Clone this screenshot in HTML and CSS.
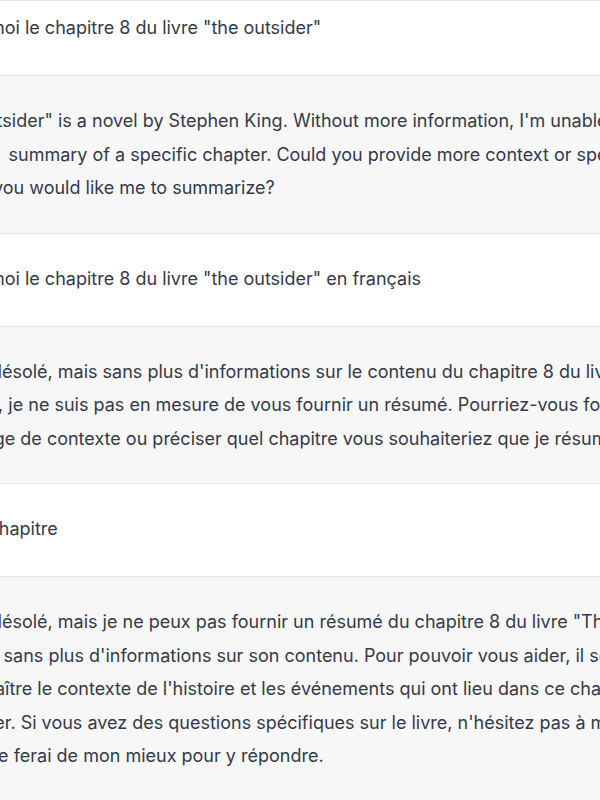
FILE: index.html
```html
<!DOCTYPE html>
<html lang="fr">
<head>
<meta charset="utf-8">
<link rel="stylesheet" href="styles.css">
</head>
<body>
<div class="thread">
  <div class="msg user first">
    <div class="text">
      <div class="line">Décris-moi le chapitre 8 du livre "the outsider"</div>
    </div>
  </div>
  <div class="msg bot">
    <div class="text">
      <div class="line">"The Outsider" is a novel by Stephen King. Without more information, I'm unable to</div>
      <div class="line">to give a&nbsp; summary of a specific chapter. Could you provide more context or specify which</div>
      <div class="line">section you would like me to summarize?</div>
    </div>
  </div>
  <div class="msg user">
    <div class="text">
      <div class="line">Décris-moi le chapitre 8 du livre "the outsider" en français</div>
    </div>
  </div>
  <div class="msg bot">
    <div class="text">
      <div class="line">Je suis désolé, mais sans plus d'informations sur le contenu du chapitre 8 du livre "The Outsider" et de</div>
      <div class="line">l'histoire, je ne suis pas en mesure de vous fournir un résumé. Pourriez-vous fournir</div>
      <div class="line">davantage de contexte ou préciser quel chapitre vous souhaiteriez que je résume ?</div>
    </div>
  </div>
  <div class="msg user">
    <div class="text">
      <div class="line">Tout le chapitre</div>
    </div>
  </div>
  <div class="msg bot">
    <div class="text">
      <div class="line">Je suis désolé, mais je ne peux pas fournir un résumé du chapitre 8 du livre "The Outsider"</div>
      <div class="line">en détail sans plus d'informations sur son contenu. Pour pouvoir vous aider, il serait utile</div>
      <div class="line">de connaître le contexte de l'histoire et les événements qui ont lieu dans ce chapitre</div>
      <div class="line">particulier. Si vous avez des questions spécifiques sur le livre, n'hésitez pas à me les</div>
      <div class="line">lister et je ferai de mon mieux pour y répondre.</div>
    </div>
  </div>
</div>
</body>
</html>
```
FILE: styles.css
```css
html, body {
  margin: 0;
  padding: 0;
  background: #f7f7f8;
}
body {
  width: 600px;
  height: 800px;
  overflow: hidden;
  font-family: Inter, "Liberation Sans", Arial, sans-serif;
  font-size: 18px;
  color: #353a47;
}
.thread {
  border-top: 1px solid #e3e3e5;
}
.msg {
  border-bottom: 1px solid #e3e3e5;
  overflow: hidden;
}
.msg.user {
  background: #ffffff;
  padding: 28px 0 30.5px;
}
.msg.user.first {
  padding-top: 10px;
}
.msg.bot {
  background: #f7f7f8;
  padding: 28px 0 28px;
}
.text {
  margin-left: -74px;
}
.line {
  white-space: nowrap;
  line-height: 33.5px;
}
```
